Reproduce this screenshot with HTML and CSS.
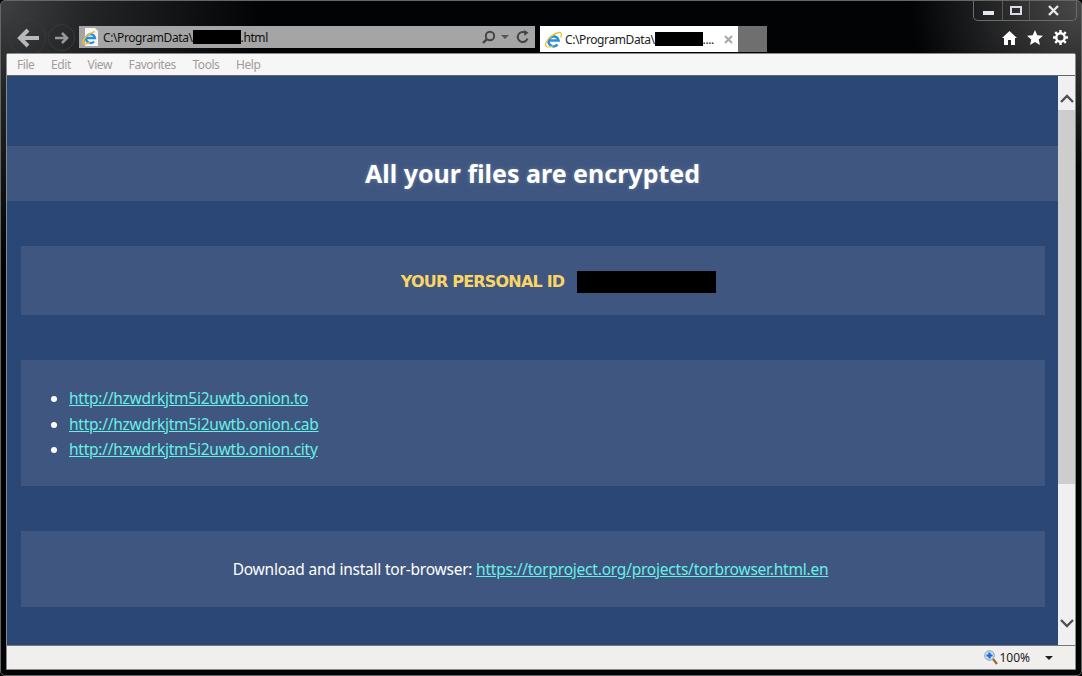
FILE: index.html
```html
<!DOCTYPE html>
<html lang="en">
<head>
    <meta charset="UTF-8">
    <title>All your files are encrypted</title>
    <link rel="stylesheet" href="styles.css">
</head>
<body>
    <div class="window">
        <!-- Caption buttons -->
        <div class="caption">
            <div class="cap-btn cap-min"><span></span></div>
            <div class="cap-btn cap-max"><span></span></div>
            <div class="cap-btn cap-close">
                <svg width="13" height="11" viewBox="0 0 13 11"><path d="M2 1l9 9M11 1l-9 9" stroke="#e8e8e8" stroke-width="2.4" fill="none"/></svg>
            </div>
        </div>

        <!-- Navigation row -->
        <div class="navbar">
            <div class="nav-btn nav-back">
                <svg width="24" height="20" viewBox="0 0 24 20"><path d="M23 10H5M12 2l-8 8 8 8" stroke="#b8b8b8" stroke-width="4" fill="none"/></svg>
            </div>
            <div class="nav-btn nav-forward">
                <svg width="16" height="14" viewBox="0 0 16 14"><path d="M1 7h12M8 2l5 5-5 5" stroke="#989898" stroke-width="2.6" fill="none"/></svg>
            </div>
            <div class="address">
                <svg class="page-icon" width="17" height="18" viewBox="0 0 17 18">
                    <path d="M3 0h10l3 3v15H3z" fill="#f6f6f6"/>
                    <path d="M4 10h9A4.500 4.500 0 1 0 12 13.500" stroke="#2b8fe0" stroke-width="2.300" fill="none"/>
                    <path d="M1 15C0 12 6 5 13 3.500" stroke="#f2c230" stroke-width="1.400" fill="none"/>
                    <path d="M1 15c1 1.500 5 .5 7-.5" stroke="#f2c230" stroke-width="1.400" fill="none"/>
                </svg>
                <span class="address-text">C:\ProgramData\<span class="redact redact-url"></span>.html</span>
                <svg class="addr-tool" width="15" height="15" viewBox="0 0 15 15"><circle cx="9" cy="6" r="4.200" stroke="#444" stroke-width="2" fill="none"/><path d="M6 9l-4 4" stroke="#444" stroke-width="2.400"/></svg>
                <span class="addr-caret"></span>
                <svg class="addr-tool" width="14" height="14" viewBox="0 0 14 14"><path d="M11.500 8.500A5 5 0 1 1 9.500 2.800" stroke="#444" stroke-width="2" fill="none"/><path d="M8 0l4.500 2.500L8.500 6z" fill="#444"/></svg>
            </div>
            <div class="tab">
                <svg width="17" height="17" viewBox="0 0 17 17">
                    <path d="M3.500 9.500h10A5 5 0 1 0 12.500 13.500" stroke="#2b8fe0" stroke-width="2.600" fill="none"/>
                    <path d="M1 15C-1 11 7 3 14 1.500c2.500-.5 3 2 1.500 5" stroke="#f2c230" stroke-width="1.300" fill="none"/>
                    <path d="M1 15c1.500 1.500 5 1 7.500-.5" stroke="#f2c230" stroke-width="1.300" fill="none"/>
                </svg>
                <span class="tab-text">C:\ProgramData\<span class="redact redact-url"></span>....</span>
                <svg class="tab-close" width="9" height="9" viewBox="0 0 9 9"><path d="M1 1l7 7M8 1l-7 7" stroke="#a8a8a8" stroke-width="2" fill="none"/></svg>
            </div>
            <div class="new-tab"></div>
            <div class="tools">
                <svg width="15" height="14" viewBox="0 0 15 14"><path d="M7.500 0L15 7h-2v7H9V9H6v5H2V7H0z" fill="#fff"/></svg>
                <svg width="16" height="15" viewBox="0 0 16 15"><path d="M8 0l2.300 5.200 5.700.5-4.300 3.800 1.300 5.500L8 12.100 3 15l1.300-5.500L0 5.700l5.700-.5z" fill="#fff"/></svg>
                <svg width="15" height="15" viewBox="0 0 15 15"><circle cx="7.500" cy="7.500" r="4.200" stroke="#fff" stroke-width="2.400" fill="none"/><path d="M7.500 0v3M7.500 12v3M0 7.500h3M12 7.500h3M2.200 2.200l2 2M10.800 10.800l2 2M12.800 2.200l-2 2M4.200 10.800l-2 2" stroke="#fff" stroke-width="2.400"/></svg>
            </div>
        </div>

        <div class="frame">
            <div class="menubar">
                <span>File</span>
                <span>Edit</span>
                <span>View</span>
                <span>Favorites</span>
                <span>Tools</span>
                <span>Help</span>
            </div>

            <div class="viewport">
                <div class="page">
                    <h1 class="banner">All your files are encrypted</h1>

                    <div class="panel panel-id">
                        <span class="id-label">YOUR PERSONAL ID</span>
                        <span class="redact redact-id"></span>
                    </div>

                    <div class="panel panel-links">
                        <ul>
                            <li><a href="#">http://hzwdrkjtm5i2uwtb.onion.to</a></li>
                            <li><a href="#">http://hzwdrkjtm5i2uwtb.onion.cab</a></li>
                            <li><a href="#">http://hzwdrkjtm5i2uwtb.onion.city</a></li>
                        </ul>
                    </div>

                    <div class="panel panel-tor">
                        Download and install tor-browser: <a href="#">https://torproject.org/projects/torbrowser.html.en</a>
                    </div>
                </div>

                <div class="scrollbar">
                    <div class="scroll-arrow arrow-up">
                        <svg width="14" height="9" viewBox="0 0 14 9"><path d="M1 8l6-6 6 6" stroke="#505050" stroke-width="2.400" fill="none"/></svg>
                    </div>
                    <div class="scroll-thumb"></div>
                    <div class="scroll-track"></div>
                    <div class="scroll-arrow arrow-down">
                        <svg width="14" height="9" viewBox="0 0 14 9"><path d="M1 1l6 6 6-6" stroke="#505050" stroke-width="2.400" fill="none"/></svg>
                    </div>
                </div>
            </div>

            <div class="statusbar">
                <svg width="14" height="15" viewBox="0 0 14 15">
                    <circle cx="5.500" cy="5.500" r="4.800" fill="#cfe2f5" stroke="#8a9db0"/>
                    <path d="M5.500 2.500v6M2.500 5.500h6" stroke="#1668d8" stroke-width="2.200"/>
                    <path d="M9 9l4 5" stroke="#9a6a30" stroke-width="2.200"/>
                </svg>
                <span class="zoom-text">100%</span>
                <span class="zoom-caret"></span>
            </div>
        </div>
    </div>
</body>
</html>
```

FILE: styles.css
```css
html, body {
    margin: 0;
    padding: 0;
    overflow: hidden;
    background: #000;
}
.window {
    position: relative;
    width: 1082px;
    height: 676px;
    box-sizing: border-box;
    padding: 0 5px 5px;
    display: flex;
    flex-direction: column;
    font-family: "Noto Sans", sans-serif;
    background:
        radial-gradient(circle at 0 0, #3f4042 0, #232426 90px, rgba(2, 3, 5, 0) 260px),
        radial-gradient(circle at 100% 0, #4a4a4a 0, rgba(2, 3, 5, 0) 170px),
        #020305;
    border: 1px solid #666;
    border-radius: 5px;
}
.caption {
    position: absolute;
    top: 0;
    right: 4px;
    height: 19px;
    display: flex;
    border: 1px solid #6c6c6c;
    border-top: none;
    border-radius: 0 0 5px 5px;
}
.cap-btn {
    height: 19px;
    display: flex;
    align-items: center;
    justify-content: center;
    border-left: 1px solid #5a5a5a;
}
.cap-btn:first-child {
    border-left: none;
}
.cap-min {
    width: 28px;
}
.cap-min span {
    width: 11px;
    height: 4px;
    margin-top: 5px;
    background: #e4e4ec;
}
.cap-max {
    width: 26px;
}
.cap-max span {
    width: 8px;
    height: 5px;
    border: 2px solid #dcdce8;
}
.cap-close {
    width: 46px;
}
.navbar {
    height: 52px;
    flex: none;
    box-sizing: border-box;
    padding: 25px 0 0 3px;
    display: flex;
    align-items: flex-start;
}
.nav-btn {
    display: flex;
    align-items: center;
    justify-content: center;
    border-radius: 50%;
    border: 1px solid #3a3a3a;
    box-sizing: border-box;
    flex: none;
}
.nav-back {
    width: 37px;
    height: 37px;
    margin-top: -7px;
}
.nav-forward {
    width: 27px;
    height: 27px;
    margin: -2px 4px 0 2px;
}
.address {
    width: 456px;
    height: 22px;
    flex: none;
    display: flex;
    align-items: center;
    box-sizing: border-box;
    padding: 0 5px 0 3px;
    background: #a5a5a5;
    font-size: 12px;
    color: #111;
}
.page-icon {
    flex: none;
}
.address-text {
    margin-left: 4px;
    flex: 1;
    white-space: nowrap;
    letter-spacing: -0.4px;
}
.addr-caret {
    width: 0;
    height: 0;
    margin: 0 7px 0 5px;
    border: 4px solid transparent;
    border-top: 4px solid #555;
    border-bottom: none;
}
.redact {
    display: inline-block;
    background: #000;
    vertical-align: middle;
}
.redact-url {
    width: 48px;
    height: 14px;
    margin-top: -2px;
}
.tab {
    width: 198px;
    height: 26px;
    margin-left: 5px;
    display: flex;
    align-items: center;
    box-sizing: border-box;
    padding: 0 5px;
    background: #fff;
    font-size: 12px;
    color: #222;
    flex: none;
}
.tab-text {
    margin-left: 3px;
    flex: 1;
    white-space: nowrap;
    letter-spacing: -0.4px;
}
.new-tab {
    width: 29px;
    height: 26px;
    background: #6f6f6f;
    flex: none;
}
.tools {
    margin-left: auto;
    padding: 4px 8px 0 0;
    display: flex;
    gap: 10px;
    align-items: center;
}
.frame {
    flex: 1;
    min-height: 0;
    display: flex;
    flex-direction: column;
    border: 1px solid #8a8a8a;
    border-radius: 2px 2px 0 0;
}
.menubar {
    height: 21px;
    flex: none;
    display: flex;
    align-items: center;
    gap: 16.700px;
    padding-left: 10px;
    background: #f6f6f6;
    border-bottom: 1px solid #666;
    font-size: 12px;
    color: #a29c9c;
    letter-spacing: -0.45px;
}
.viewport {
    flex: 1;
    min-height: 0;
    display: flex;
    overflow: hidden;
}
.page {
    flex: 1;
    overflow: hidden;
    background: #2a4775;
    color: #fff;
    padding-top: 70px;
}
.banner {
    margin: 0 0 45px;
    height: 55px;
    line-height: 55px;
    background: #3e5680;
    text-align: center;
    font-size: 25px;
    font-weight: bold;
    text-shadow: 0 0 4px rgba(255, 255, 255, 0.25);
}
.panel {
    margin: 0 13px 45px 14px;
    background: #3e5680;
}
.panel-id {
    height: 69px;
    box-sizing: border-box;
    padding: 2px 0 0 51px;
    display: flex;
    align-items: center;
    justify-content: center;
    gap: 13px;
}
.id-label {
    font-family: "DejaVu Sans", sans-serif;
    color: #fad565;
    font-weight: bold;
    font-size: 16px;
    letter-spacing: -0.8px;
}
.redact-id {
    width: 139px;
    height: 22px;
}
.panel-links {
    height: 126px;
    box-sizing: border-box;
    padding-top: 26px;
    font-size: 15.500px;
    letter-spacing: -0.25px;
}
.panel-links ul {
    margin: 0;
    padding-left: 48px;
}
.panel-links li {
    height: 25.500px;
    line-height: 25px;
}
a {
    color: #66f0e6;
}
.panel-tor {
    height: 76px;
    box-sizing: border-box;
    padding-right: 5px;
    line-height: 76px;
    text-align: center;
    font-size: 15.500px;
    letter-spacing: -0.22px;
}
.scrollbar {
    width: 17px;
    flex: none;
    display: flex;
    flex-direction: column;
    background: #f0f0f0;
}
.scroll-arrow {
    height: 34px;
    flex: none;
    box-sizing: border-box;
    display: flex;
    align-items: center;
    justify-content: center;
}
.arrow-up {
    padding-top: 10px;
}
.arrow-down {
    padding-bottom: 10px;
}
.scroll-thumb {
    height: 374px;
    flex: none;
    background: #cdcdcd;
}
.scroll-track {
    flex: 1;
}
.statusbar {
    height: 23px;
    flex: none;
    display: flex;
    align-items: center;
    justify-content: flex-end;
    padding-right: 22px;
    background: #f1eeee;
    border-top: 1px solid #777;
    font-size: 12px;
    color: #222;
}
.zoom-text {
    margin-left: 1px;
}
.zoom-caret {
    margin-left: 15px;
    width: 0;
    height: 0;
    border: 4px solid transparent;
    border-top: 4px solid #222;
    border-bottom: none;
}
```
